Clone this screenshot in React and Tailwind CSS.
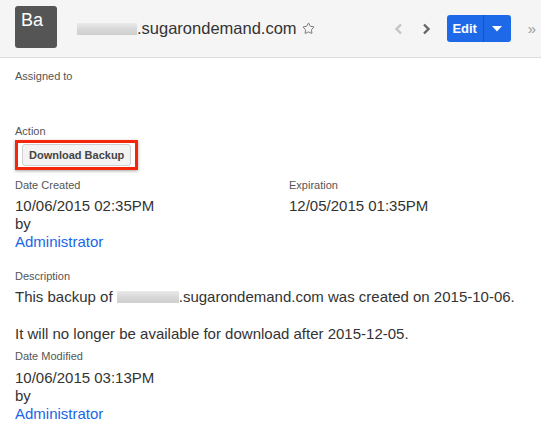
import { Star } from "lucide-react";

function Label({ children }) {
  return <div className="text-[11px] leading-[14px] text-[#555]">{children}</div>;
}

function Blur({ className }) {
  return (
    <span className={`inline-block h-[12px] align-[-1px] bg-gradient-to-b from-[#eaeaea] via-[#d8d8d8] to-[#cfcfcf] ${className}`} />
  );
}

function Chevron({ dir, className }) {
  return (
    <svg width="9" height="12" viewBox="0 0 9 12" className={className}>
      <path
        d={dir === "left" ? "M7 1.5 L2.5 6 L7 10.5" : "M2 1.5 L6.5 6 L2 10.5"}
        fill="none"
        stroke="currentColor"
        strokeWidth="2.4"
      />
    </svg>
  );
}

function Stamp({ date }) {
  return (
    <div className="text-[15px] leading-[18px] text-[#333]">
      <div>{date}</div>
      <div>by</div>
      <div className="text-[#1a66e6]">Administrator</div>
    </div>
  );
}

export default function App() {
  return (
    <div className="h-[425px] w-[541px] overflow-hidden bg-white font-['Liberation_Sans',Arial,sans-serif]">
      <header className="flex h-[58px] items-center border-b border-[#dcdcdc] bg-[#f5f5f5] pl-[15px]">
        <div className="mb-[3px] h-[42px] w-[42px] rounded-[3px] bg-[#555] pl-[6px] pt-[4px] text-[18px] leading-[20px] text-white">
          Ba
        </div>
        <div className="ml-[20px] flex items-center text-[16.5px] text-[#333]">
          <Blur className="w-[60px]" />
          <span>.sugarondemand.com</span>
        </div>
        <Star className="ml-[5px] text-[#666]" size={13} strokeWidth={1.6} />
        <div className="ml-auto flex items-center">
          <Chevron dir="left" className="text-[#c4c4c4]" />
          <Chevron dir="right" className="ml-[19px] text-[#666]" />
          <div className="ml-[16px] flex h-[27px] overflow-hidden rounded-[3px] bg-[#1e69e8] text-white">
            <div className="flex w-[36px] items-center justify-center text-[13px] font-bold">Edit</div>
            <div className="w-px bg-[#1553c0]" />
            <div className="flex w-[27px] items-center justify-center">
              <svg width="10" height="6" viewBox="0 0 10 6">
                <path d="M0 0 H10 L5 5.5 Z" fill="white" />
              </svg>
            </div>
          </div>
          <div className="ml-[17px] mr-[5px] text-[15px] leading-none text-[#999]">»</div>
        </div>
      </header>

      <div className="pl-[15px] pt-[11px]">
        <Label>Assigned to</Label>
        <div className="mt-[41px]">
          <Label>Action</Label>
        </div>
        <div className="mt-[2px] inline-block border-[3px] border-[#f5260c] px-[4px] py-[1px] shadow-[0_1px_3px_rgba(0,0,0,0.35)]">
          <div className="rounded-[3px] border border-[#d0d0d0] bg-[#f3f3f3] px-[6px] py-[3px] text-[11px] font-bold leading-[14px] text-[#444]">
            Download Backup
          </div>
        </div>

        <div className="mt-[8px] grid grid-cols-[274px_1fr]">
          <div>
            <Label>Date Created</Label>
            <div className="mt-[5px]">
              <Stamp date="10/06/2015 02:35PM" />
            </div>
          </div>
          <div>
            <Label>Expiration</Label>
            <div className="mt-[5px] text-[15px] leading-[18px] text-[#333]">12/05/2015 01:35PM</div>
          </div>
        </div>

        <div className="mt-[18px]">
          <Label>Description</Label>
          <div className="mt-[5px] text-[15px] leading-[18px] text-[#333]">
            <div>
              This backup of <Blur className="w-[62px]" />.sugarondemand.com was created on 2015-10-06.
            </div>
            <div className="mt-[19px]">It will no longer be available for download after 2015-12-05.</div>
          </div>
        </div>

        <div className="mt-[6px]">
          <Label>Date Modified</Label>
          <div className="mt-[6px]">
            <Stamp date="10/06/2015 03:13PM" />
          </div>
        </div>
      </div>
    </div>
  );
}
